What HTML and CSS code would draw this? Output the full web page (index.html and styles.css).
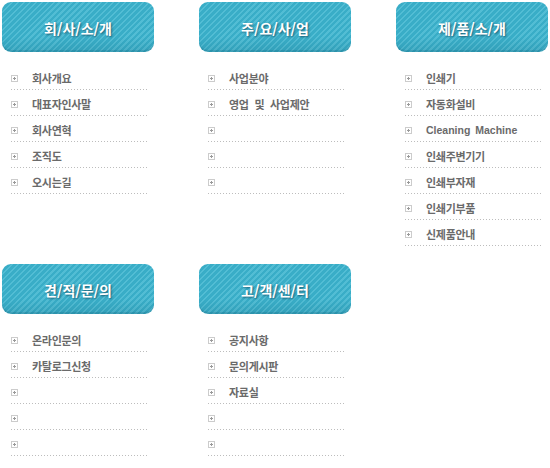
FILE: index.html
```html
<!DOCTYPE html>
<html lang="ko">
<head>
    <meta charset="UTF-8">
    <meta name="viewport" content="width=device-width, initial-scale=1.0">
    <title>사이트맵</title>
    <link rel="stylesheet" href="styles.css">
</head>
<body>

    <!-- 사이트맵 -->
    <div class="sitemap">

        <div class="menu">
            <div class="menu-title">회/사/소/개</div>
            <ul class="menu-list">
                <li>회사개요</li>
                <li>대표자인사말</li>
                <li>회사연혁</li>
                <li>조직도</li>
                <li>오시는길</li>
            </ul>
        </div>

        <div class="menu">
            <div class="menu-title">주/요/사/업</div>
            <ul class="menu-list">
                <li>사업분야</li>
                <li>영업 및 사업제안</li>
                <li></li>
                <li></li>
                <li></li>
            </ul>
        </div>

        <div class="menu">
            <div class="menu-title">제/품/소/개</div>
            <ul class="menu-list">
                <li>인쇄기</li>
                <li>자동화설비</li>
                <li class="latin">Cleaning Machine</li>
                <li>인쇄주변기기</li>
                <li>인쇄부자재</li>
                <li>인쇄기부품</li>
                <li>신제품안내</li>
            </ul>
        </div>

        <div class="menu">
            <div class="menu-title">견/적/문/의</div>
            <ul class="menu-list">
                <li>온라인문의</li>
                <li>카탈로그신청</li>
                <li></li>
                <li></li>
                <li></li>
            </ul>
        </div>

        <div class="menu">
            <div class="menu-title">고/객/센/터</div>
            <ul class="menu-list">
                <li>공지사항</li>
                <li>문의게시판</li>
                <li>자료실</li>
                <li></li>
                <li></li>
            </ul>
        </div>

    </div>

</body>
</html>
```

FILE: styles.css
```css
/* 기본 */
body {
    margin: 0;
    background-color: #ffffff;
    font-family: "Noto Sans CJK KR", "Liberation Sans", sans-serif;
}

/* 사이트맵 그리드 */
.sitemap {
    display: grid;
    grid-template-columns: repeat(3, 152px);
    column-gap: 45px;
    row-gap: 18px;
    align-items: start;
    padding: 2px 0 0 2px;
}

/* 메뉴 제목 (줄무늬 버튼) */
.menu-title {
    height: 50px;
    border-radius: 9px;
    background-color: #3aafc8;
    background-image:
        linear-gradient(to bottom, rgba(255,255,255,0) 70%, rgba(0,60,80,0.12) 100%),
        repeating-linear-gradient(135deg, #39adc7 0 2.5px, #52bdd4 2.5px 4.2px);
    box-shadow: inset 0 -2px 0 rgba(0,60,80,0.12);
    display: flex;
    align-items: center;
    justify-content: center;
    padding-top: 2px;
    box-sizing: border-box;
    color: #ffffff;
    font-size: 14px;
    font-weight: bold;
    letter-spacing: 0;
    text-shadow: 1px 1px 2px rgba(0,40,60,0.6);
}

/* 메뉴 목록 */
.menu-list {
    list-style: none;
    margin: 12px 6px 0 9px;
    padding: 0;
}
.menu-list li {
    height: 26px;
    box-sizing: border-box;
    display: flex;
    align-items: center;
    padding-top: 2px;
    font-size: 11px;
    font-weight: bold;
    color: #6a6a6a;
    letter-spacing: -0.3px;
    word-spacing: 3px;
    background-image: linear-gradient(to right, #bdbdbd 1px, transparent 1px);
    background-size: 3px 1px;
    background-repeat: repeat-x;
    background-position: left bottom;
}
.menu-list li.latin {
    font-family: "Liberation Sans", sans-serif;
    letter-spacing: 0;
    word-spacing: 2px;
    font-size: 10.5px;
}

/* + 아이콘 */
.menu-list li::before {
    content: "";
    flex: none;
    width: 5px;
    height: 5px;
    margin-right: 14px;
    border: 1px solid #cccccc;
    background-image:
        linear-gradient(#9a9a9a, #9a9a9a),
        linear-gradient(#9a9a9a, #9a9a9a);
    background-size: 3px 1px, 1px 3px;
    background-position: center, center;
    background-repeat: no-repeat;
}
```
